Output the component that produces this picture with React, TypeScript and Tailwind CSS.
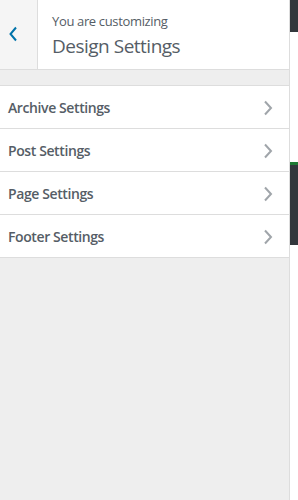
import React from "react";

const items = ["Archive Settings", "Post Settings", "Page Settings", "Footer Settings"];

export default function App() {
  return (
    <div className="flex h-[500px] w-[298px] overflow-hidden bg-white" style={{ fontFamily: '"Open Sans", "Noto Sans", sans-serif' }}>
      <div className="flex w-[290px] shrink-0 flex-col border-r border-[#ddd] bg-[#eee]">
        <div className="flex h-[70px] border-b border-[#ddd] bg-white">
          <div className="flex w-[38px] shrink-0 items-start border-r border-[#ddd] bg-[#f5f5f5] pl-[8px] pt-[26px]">
            <svg width="11" height="16" viewBox="0 0 11 16">
              <path d="M8 1.5 L2.5 8 L8 14.5" fill="none" stroke="#0073aa" strokeWidth="2" />
            </svg>
          </div>
          <div className="flex flex-col pl-[14px] pt-[12px] text-[#555d66]">
            <span className="text-[13px] leading-[18px] tracking-[-0.35px]">You are customizing</span>
            <span className="mt-[4px] text-[19px] leading-[24px] tracking-[-0.5px]">Design Settings</span>
          </div>
        </div>
        <div className="mt-[15px] border-t border-[#ddd] bg-white">
          {items.map((t) => (
            <div key={t} className="flex h-[43px] items-center justify-between border-b border-[#ddd] pl-[8px] pr-[16px] pt-[1px]">
              <span className="text-[14px] font-semibold tracking-[-0.4px] text-[#555d66]">{t}</span>
              <svg width="10" height="16" viewBox="0 0 10 16">
                <path d="M2 1.5 L8 8 L2 14.5" fill="none" stroke="#a0a5aa" strokeWidth="2" />
              </svg>
            </div>
          ))}
        </div>
      </div>
      <div className="flex flex-1 flex-col">
        <div className="h-[32px] bg-[#32373c]" />
        <div className="h-[130px] bg-white" />
        <div className="h-[3px] bg-[#1e7a34]" />
        <div className="h-[80px] bg-[#32373c]" />
        <div className="flex-1 bg-white" />
      </div>
    </div>
  );
}
